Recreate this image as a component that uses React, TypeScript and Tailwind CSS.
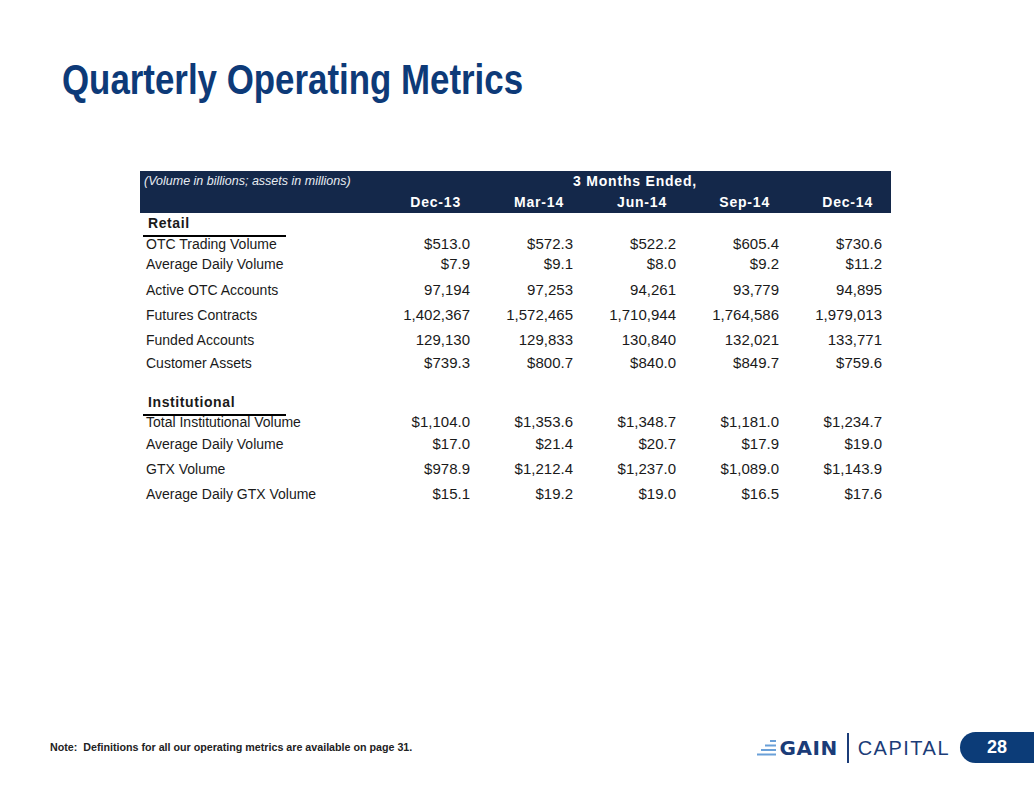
import React from "react";

type Row = {
  label: string;
  values?: string[];
  heading?: boolean;
  h: number;
};

const rows: Row[] = [
  { label: "Retail", heading: true, h: 20 },
  { label: "OTC Trading Volume", values: ["$513.0", "$572.3", "$522.2", "$605.4", "$730.6"], h: 18 },
  { label: "Average Daily Volume", values: ["$7.9", "$9.1", "$8.0", "$9.2", "$11.2"], h: 26 },
  { label: "Active OTC Accounts", values: ["97,194", "97,253", "94,261", "93,779", "94,895"], h: 26 },
  { label: "Futures Contracts", values: ["1,402,367", "1,572,465", "1,710,944", "1,764,586", "1,979,013"], h: 25 },
  { label: "Funded Accounts", values: ["129,130", "129,833", "130,840", "132,021", "133,771"], h: 24 },
  { label: "Customer Assets", values: ["$739.3", "$800.7", "$840.0", "$849.7", "$759.6"], h: 19 },
  { label: "", h: 21 },
  { label: "Institutional", heading: true, h: 19 },
  { label: "Total Institutional Volume", values: ["$1,104.0", "$1,353.6", "$1,348.7", "$1,181.0", "$1,234.7"], h: 22 },
  { label: "Average Daily Volume", values: ["$17.0", "$21.4", "$20.7", "$17.9", "$19.0"], h: 22 },
  { label: "GTX Volume", values: ["$978.9", "$1,212.4", "$1,237.0", "$1,089.0", "$1,143.9"], h: 28 },
  { label: "Average Daily GTX Volume", values: ["$15.1", "$19.2", "$19.0", "$16.5", "$17.6"], h: 16 },
];

const periods = ["Dec-13", "Mar-14", "Jun-14", "Sep-14", "Dec-14"];

const GainLogo = () => (
  <div className="flex items-center">
    <svg width="20" height="18" viewBox="0 0 20 18" className="mr-[3px]">
      <rect x="13" y="1" width="6" height="2" fill="#6aa0d8" />
      <rect x="8" y="5.5" width="11" height="2" fill="#6aa0d8" />
      <rect x="4" y="10" width="15" height="2" fill="#6aa0d8" />
      <rect x="0" y="14.5" width="19" height="2" fill="#6aa0d8" />
    </svg>
    <span className="font-['DejaVu_Sans',sans-serif] text-[20px] font-bold tracking-[0.5px] text-[#1b3c78] leading-none">
      GAIN
    </span>
    <div className="mx-[9px] h-[30px] w-[2px] bg-[#1b3c78]" />
    <span className="font-['Liberation_Sans',sans-serif] text-[20px] tracking-[1.5px] text-[#1b3c78] leading-none">
      CAPITAL
    </span>
  </div>
);

export default function App() {
  return (
    <div className="relative h-[799px] w-[1034px] bg-white font-['Liberation_Sans',sans-serif] text-[#1a1a1a]">
      {/* Title */}
      <div className="pl-[62px] pt-[56px]">
        <h1 className="inline-block origin-left scale-x-[0.83] text-[42px] font-bold leading-[48px] text-[#0d3a78]">
          Quarterly Operating Metrics
        </h1>
      </div>

      {/* Table */}
      <div className="ml-[140px] mt-[67px] w-[751px]">
        <div className="bg-[#14284a] text-white">
          <div className="grid h-[21px] grid-cols-[236px_515px] items-center">
            <span className="pl-[4px] text-[12.5px] italic text-[#e8ecf2]">
              (Volume in billions; assets in millions)
            </span>
            <span className="pr-[194px] text-right text-[14px] font-bold tracking-[0.8px]">
              3 Months Ended,
            </span>
          </div>
          <div className="grid h-[21px] grid-cols-[236px_repeat(5,103px)] items-center">
            <span />
            {periods.map((p) => (
              <span key={p} className="pr-[18px] text-right text-[14px] font-bold tracking-[0.8px]">
                {p}
              </span>
            ))}
          </div>
        </div>

        {rows.map((r, i) => (
          <div
            key={i}
            className="grid grid-cols-[236px_repeat(5,103px)] items-center text-[14px]"
            style={{ height: r.h }}
          >
            {r.heading ? (
              <span className="ml-[3px] w-[143px] self-end border-b-2 border-black pb-[1px] pl-[5px] font-bold tracking-[0.6px]">
                {r.label}
              </span>
            ) : (
              <span className="pl-[6px]">{r.label}</span>
            )}
            {r.values?.map((v, j) => (
              <span key={j} className="pr-[9px] text-right text-[15px]">
                {v}
              </span>
            ))}
          </div>
        ))}
      </div>

      {/* Footer */}
      <div className="absolute bottom-[36px] left-0 right-0 flex items-center">
        <p className="ml-[50px] flex-1 text-[10.7px] font-bold text-[#222]">
          Note:&nbsp; Definitions for all our operating metrics are available on page 31.
        </p>
        <GainLogo />
        <div className="ml-[10px] flex h-[31px] w-[74px] items-center justify-center rounded-l-full bg-[#0c3c78] text-[18px] font-bold text-white">
          28
        </div>
      </div>
    </div>
  );
}
